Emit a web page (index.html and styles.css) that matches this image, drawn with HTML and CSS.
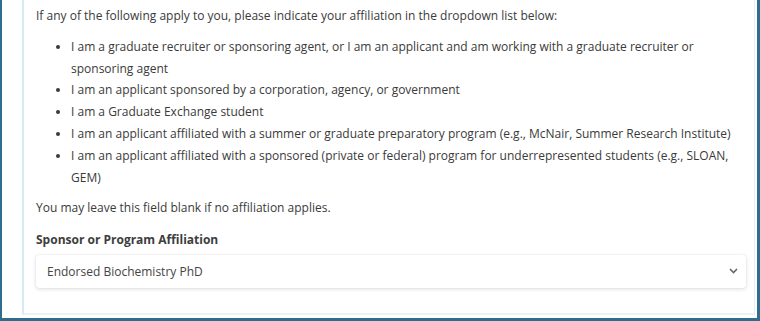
FILE: index.html
```html
<!DOCTYPE html>
<html>
<head>
<meta charset="utf-8">
<link rel="stylesheet" href="styles.css">
</head>
<body>
<div class="frame">
  <div class="panel">
    <p class="intro">If any of the following apply to you, please indicate your affiliation in the dropdown list below:</p>
    <ul class="list">
      <li>I am a graduate recruiter or sponsoring agent, or I am an applicant and am working with a graduate recruiter or sponsoring agent</li>
      <li>I am an applicant sponsored by a corporation, agency, or government</li>
      <li>I am a Graduate Exchange student</li>
      <li>I am an applicant affiliated with a summer or graduate preparatory program (e.g., McNair, Summer Research Institute)</li>
      <li>I am an applicant affiliated with a sponsored (private or federal) program for underrepresented students (e.g., SLOAN, GEM)</li>
    </ul>
    <p class="note">You may leave this field blank if no affiliation applies.</p>
    <div class="label">Sponsor or Program Affiliation</div>
    <div class="select">
      <span class="value">Endorsed Biochemistry PhD</span>
      <svg class="chev" width="9" height="6" viewBox="0 0 9 6"><path d="M1 1 L4.5 4.5 L8 1" fill="none" stroke="#666" stroke-width="1.6"/></svg>
    </div>
  </div>
</div>
</body>
</html>
```
FILE: styles.css
```css
html, body {
  margin: 0;
  padding: 0;
  background: #fff;
}
.frame {
  box-sizing: border-box;
  width: 760px;
  height: 321px;
  border-left: 2px solid #2d6d8e;
  border-right: 3px solid #2d6d8e;
  border-bottom: 3px solid #2d6d8e;
  padding-left: 20px;
  padding-right: 2px;
  padding-bottom: 3px;
  overflow: hidden;
}
.panel {
  box-sizing: border-box;
  height: 100%;
  border-left: 2px solid #d6eaf5;
  border-right: 1px solid #e3eef4;
  border-bottom: 2px solid #eef0f2;
  padding: 5px 8px 0 12px;
  font-family: "Open Sans", "Noto Sans", sans-serif;
  font-size: 12px;
  color: #3a3a3a;
  line-height: 21.8px;
}
.intro {
  margin: 0 0 9px;
}
.list {
  margin: 0 0 9px;
  padding-left: 35px;
}
.note {
  margin: 0 0 10px;
}
.label {
  font-weight: 700;
  color: #3d3d3d;
  margin-bottom: 4px;
}
.select {
  display: flex;
  align-items: center;
  justify-content: space-between;
  height: 33px;
  padding: 0 8px 0 11px;
  border-radius: 3px;
  background: #fff;
  box-shadow: 0 1px 4px rgba(0,0,0,0.14), 0 0 1px rgba(0,0,0,0.12);
  color: #444;
}
.chev {
  display: block;
}
```
